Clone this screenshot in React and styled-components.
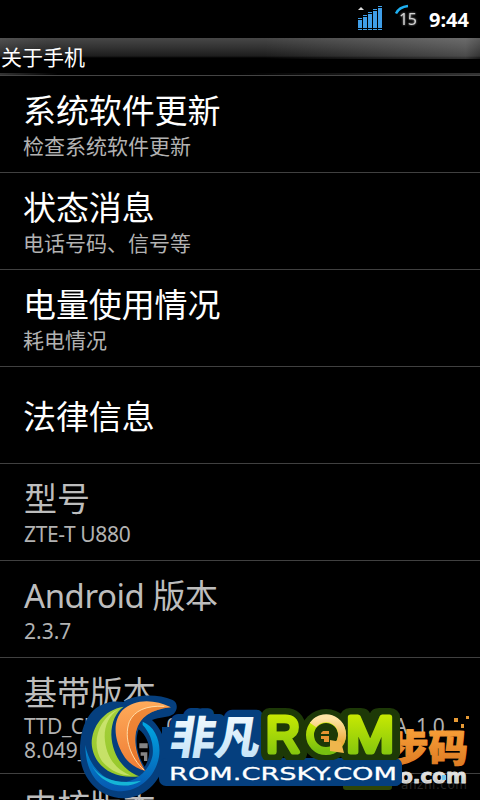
import React from 'react';
import styled, { createGlobalStyle } from 'styled-components';

const GlobalStyle = createGlobalStyle`
    html, body {
        margin: 0;
        background: #000;
        overflow: hidden;
    }
`
const Screen = styled.div`
    position: relative;
    width: 480px;
    height: 800px;
    overflow: hidden;
    background: #000;
    color: #fff;
    font-family: 'Noto Sans', 'Noto Sans CJK SC', sans-serif;
`
const StatusBar = styled.div`
    display: flex;
    justify-content: flex-end;
    align-items: flex-start;
    height: 38px;
    padding-right: 10px;
    box-sizing: border-box;
`
const Clock = styled.span`
    width: 41px;
    margin-left: 10px;
    padding-top: 6px;
    font-size: 20px;
    font-weight: 700;
    line-height: 27px;
    white-space: nowrap;
`
const TitleBar = styled.div`
    height: 38px;
    box-sizing: border-box;
    padding: 5px 0 0 1px;
    font-size: 21px;
    line-height: 29px;
    background:
        linear-gradient(90deg, #333, #000 12%, #000 50%, #333 100%) 0 35px / 100% 2px no-repeat,
        linear-gradient(#444, #444) 0 37px / 100% 1px no-repeat,
        linear-gradient(90deg, rgba(255,255,255,0.06), transparent 10%, transparent 55%, rgba(255,255,255,0.2) 97%, rgba(255,255,255,0.1)) 0 0 / 100% 21px no-repeat,
        linear-gradient(#474747, #333 45%, #1d1d1d 90%, #000) 0 0 / 100% 20px no-repeat,
        #000;
`
const Row = styled.div`
    display: flex;
    flex-direction: column;
    justify-content: center;
    flex-shrink: 0;
    height: ${props => props.$height || 97}px;
    box-sizing: border-box;
    padding: 0 20px ${props => props.$lift || 0}px ${props => props.$latin ? 24 : 23}px;
    border-bottom: 1px solid #404040;
    color: ${props => props.$dim ? '#bdbdbd' : '#fff'};
`
const RowTitle = styled.div`
    padding-top: ${props => props.$alone ? 3 : 1}px;
    margin-bottom: -1px;
    font-size: 33px;
    line-height: 44px;
    white-space: nowrap;
    letter-spacing: ${props => props.$spacing || -0.1}px;
`
const RowSummary = styled.div`
    display: flex;
    min-height: 24px;
    color: #b2b2b2;
    font-size: 21px;
    line-height: ${props => props.$line || 28}px;
    white-space: pre;
    letter-spacing: ${props => props.$spacing || 0}px;
`
const Piece = styled.span`
    width: ${props => props.$width}px;
`
const Overlay = styled.svg`
    position: absolute;
    left: 76px;
    top: 690px;
`

const Signal = () => (
    <svg width="26" height="31" viewBox="0 0 26 31">
        <path d="M0 10l3-3 3 3z" fill="#ddd" />
        <g fill="#3f9ee8">
            <path d="M0 18h4v1H0zM5 15h4v1H5zM10 12h4v1h-4zM15 9h4v1h-4zM20 6h4v1h-4z" />
            <path d="M0 20h4v8H0zM5 17h4v11H5zM10 14h4v14h-4zM15 11h4v17h-4zM20 8h4v20h-4zM0 29h4v1H0zM5 29h4v1H5zM10 29h4v1h-4zM15 29h4v1h-4zM20 29h4v1h-4z" />
        </g>
    </svg>
)

const BatteryLevel = styled.text`
    font: 16px 'Noto Sans', sans-serif;
    fill: #d4d4d4;
    filter: drop-shadow(0 0 1px #999);
`

const Battery = () => (
    <svg width="35" height="31" viewBox="0 0 35 31">
        <path d="M12 13.5Q15 7 24 6" fill="none" stroke="#1fb0f2" strokeWidth="2.4" />
        <BatteryLevel x="15" y="25" textLength="18">15</BatteryLevel>
    </svg>
)

const CjkText = styled.text`
    font-family: 'Noto Sans CJK SC', sans-serif;
    font-weight: ${props => props.$weight || 900};
    stroke-linejoin: round;
`
const LogoText = styled.text`
    font-family: ${props => props.$round ? "'Liberation Sans'" : "'DejaVu Sans'"}, sans-serif;
    font-weight: ${props => props.$bold ? 700 : 400};
    stroke-linejoin: round;
`

const PixelMark = () => (
    <g>
        <CjkText x="389" y="762" fontSize="37" textLength="79" lengthAdjust="spacingAndGlyphs" fill="url(#amber)" stroke="url(#amber)" strokeWidth="1.2">步码</CjkText>
        <path d="M454 718h4v4h-4zM466 716h3v3h-3zM461 724h3v4h-3z" fill="#e79a35" />
        <LogoText x="401" y="789" fontSize="12" textLength="66" fill="#262626">anzhi.com</LogoText>
        <LogoText $bold x="399" y="783" fontSize="20" textLength="68" lengthAdjust="spacingAndGlyphs" fill="url(#silver)" stroke="#ddd" strokeWidth="1">o.com</LogoText>
        <rect x="442" y="775" width="4" height="5" fill="#73c7ef" />
        <rect x="343" y="780" width="49" height="10" rx="3" fill="#2e4507" />
    </g>
)

const Swirl = () => (
    <g transform="translate(76 690) scale(.3333)">
        <path fillRule="evenodd" fill="#053f7e" d="M12 190C10 110 40 50 95 38C112 32 130 36 142 36C170 14 240 8 290 30C306 38 306 58 293 72C275 84 252 80 228 90C255 115 270 150 268 190C264 270 210 325 140 325C65 322 14 262 12 190ZM188 118C176 150 182 195 206 230C226 200 228 150 188 118Z" />
        <path d="M200 95C238 110 256 155 249 200C238 262 190 302 135 304C75 304 28 255 28 165C38 225 80 270 130 276C180 280 222 240 230 195C234 160 222 128 200 105Z" fill="url(#ocean)" />
        <path d="M48 228C75 270 130 284 196 272C150 300 82 290 48 228Z" fill="#15b5d6" />
        <path d="M143 50C82 60 48 110 47 160C50 222 105 270 190 259C138 240 108 190 106 135C106 96 120 66 143 50Z" fill="url(#leaf)" />
        <path d="M128 57C64 85 44 165 78 214C102 242 135 256 165 257C115 238 88 195 86 140C86 105 100 75 128 57Z" fill="#e3f08e" opacity=".6" />
        <path d="M285 52C235 26 175 26 140 60C108 95 115 150 142 195C158 222 182 236 208 243C188 210 172 170 180 125C190 82 225 58 285 52Z" fill="url(#flame)" />
        <path d="M285 52C225 44 178 56 160 95C142 145 165 205 204 240C181 202 170 165 180 125C190 82 225 58 285 52Z" fill="#d9600f" opacity=".4" />
        <path d="M265 49C210 46 175 62 160 95C142 145 165 205 204 240" fill="none" stroke="#ffdca6" strokeWidth="3" />
        <path d="M190 160h25v15h-25zM194 187h20v26h-10v-16h-10z" fill="#858585" />
    </g>
)

const Brand = () => (
    <g>
        <rect x="162" y="727" width="108" height="34" fill="#053f7e" />
        <g transform="translate(169 756) skewX(-9)">
            <CjkText $weight={700} x="0" y="-2" fontSize="46" textLength="92" lengthAdjust="spacingAndGlyphs" fill="#053f7e" stroke="#053f7e" strokeWidth="14">非凡</CjkText>
            <CjkText x="-1" y="-2" fontSize="45" textLength="90" lengthAdjust="spacingAndGlyphs" fill="url(#ice)">非凡</CjkText>
        </g>
        <rect x="159" y="758" width="243" height="28" rx="7" fill="#053f7e" />
        <g stroke="#1d3907" strokeWidth="18" fill="#1d3907">
            <LogoText $round $bold x="266" y="753" fontSize="52" textLength="34" lengthAdjust="spacingAndGlyphs">R</LogoText>
            <circle cx="326" cy="735" r="17" />
            <LogoText $round $bold x="346" y="753" fontSize="52" textLength="48" lengthAdjust="spacingAndGlyphs">M</LogoText>
        </g>
        <g fill="url(#lime)" stroke="url(#lime)" strokeWidth="5">
            <LogoText $round x="266" y="752" fontSize="50" textLength="34" lengthAdjust="spacingAndGlyphs">R</LogoText>
            <LogoText $round x="346" y="752" fontSize="50" textLength="48" lengthAdjust="spacingAndGlyphs">M</LogoText>
        </g>
        <circle cx="326" cy="735" r="16" fill="none" stroke="url(#lime)" strokeWidth="8" />
        <path d="M313 725A16 16 0 1 1 339 744" fill="none" stroke="url(#gold)" strokeWidth="8" />
        <path d="M330 740L341 742L344 753L330 751Z" fill="#efb64c" />
        <path d="M323 731h6v3h-8v-1zM321 736h8v6h-5v-3h-3z" fill="#e79431" />
        <rect x="251" y="760" width="151" height="26" rx="7" fill="#053f7e" />
        <LogoText x="169" y="780" fontSize="18" textLength="228" lengthAdjust="spacingAndGlyphs" fill="#fff" stroke="#fff" strokeWidth=".3">ROM.CRSKY.COM</LogoText>
    </g>
)

const Gradient = ({ id, from, to }) => (
    <linearGradient id={id} x1="0" y1="0" x2="0" y2="1">
        <stop stopColor={from} />
        <stop offset="1" stopColor={to} />
    </linearGradient>
)

const items = [
    { title: '系统软件更新', summary: '检查系统软件更新' },
    { title: '状态消息', summary: '电话号码、信号等' },
    { title: '电量使用情况', summary: '耗电情况' },
    { title: '法律信息' },
    { title: '型号', summary: 'ZTE-T U880', dim: true, spacing: -0.35 },
    { title: 'Android 版本', summary: '2.3.7', dim: true, titleSpacing: -0.45 },
]

export default () => {
    return (
        <Screen>
            <GlobalStyle />
            <StatusBar>
                <Signal />
                <Battery />
                <Clock>9:44</Clock>
            </StatusBar>
            <TitleBar>关于手机</TitleBar>
            {items.map(item => (
                <Row key={item.title} $dim={item.dim} $latin={item.dim}>
                    <RowTitle $alone={!item.summary} $spacing={item.titleSpacing}>{item.title}</RowTitle>
                    {item.summary && <RowSummary $spacing={item.spacing}>{item.summary}</RowSummary>}
                </Row>
            ))}
            <Row $dim $latin $height={116}>
                <RowTitle>基带版本</RowTitle>
                <RowSummary $line={24} $spacing={-0.4}>
                    <Piece $width={137}>TTD_CPB</Piece>
                    <Piece $width={96}>.0</Piece>
                    <Piece $width={137}>T</Piece>
                    <Piece>A_1.0</Piece>
                </RowSummary>
                <RowSummary $line={24}>8.049_</RowSummary>
            </Row>
            <Row $dim $latin $lift={10}>
                <RowTitle>内核版本</RowTitle>
                <RowSummary />
            </Row>
            <Overlay width="404" height="110" viewBox="76 690 404 110">
                <defs>
                    <Gradient id="amber" from="#ffa83c" to="#d97520" />
                    <Gradient id="silver" from="#fff" to="#bbb" />
                    <Gradient id="ocean" from="#00a7e2" to="#0757b0" />
                    <Gradient id="leaf" from="#a5cf3b" to="#97c92a" />
                    <Gradient id="flame" from="#ffab5a" to="#ee7c34" />
                    <Gradient id="ice" from="#fff" to="#bce0f7" />
                    <Gradient id="lime" from="#d4ef00" to="#76bf10" />
                    <Gradient id="gold" from="#ffe5a4" to="#eba838" />
                </defs>
                <PixelMark />
                <Swirl />
                <Brand />
            </Overlay>
        </Screen>
    )
}
